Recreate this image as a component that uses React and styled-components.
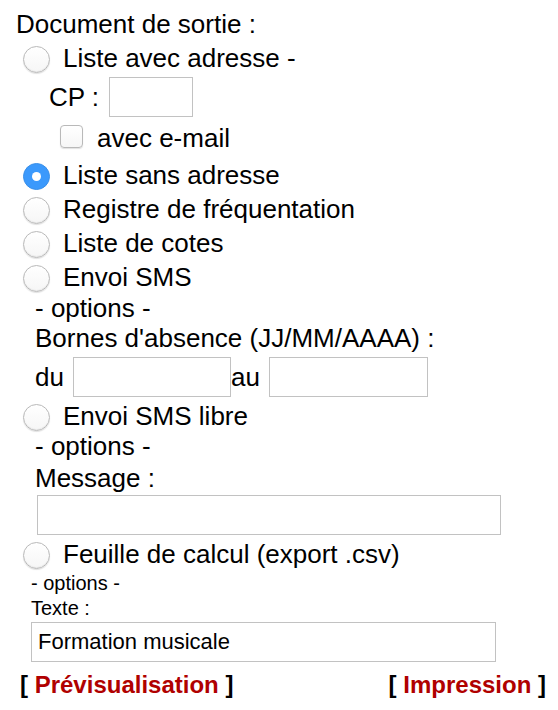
import React, { useState } from 'react'
import styled, { createGlobalStyle } from 'styled-components'

const GlobalStyle = createGlobalStyle`
  body {
    margin: 0;
    background: #fff;
    font-family: "Liberation Sans", Arial, Helvetica, sans-serif;
    color: #000;
  }
`

const Page = styled.form`
  display: flex;
  flex-direction: column;
  padding: 9px 10px 0 16px;
  font-size: 26px;
  line-height: 30px;
`

const Line = styled.div`
  display: flex;
  align-items: center;
  margin-top: ${p => p.$mt || 0}px;
  padding-left: ${p => p.$indent || 0}px;
  height: ${p => p.$h || 30}px;
  font-size: ${p => p.$size || 26}px;
  line-height: ${p => p.$h || 30}px;
  white-space: nowrap;
`

const RadioRow = styled.label`
  display: flex;
  align-items: center;
  height: 32px;
  margin-top: ${p => p.$mt || 0}px;
  padding-left: 7px;
  white-space: nowrap;
  cursor: pointer;
`

const RadioDot = styled.span`
  flex: none;
  box-sizing: border-box;
  width: 27px;
  height: 27px;
  margin: 2px 13px 0 0;
  border-radius: 50%;
  display: flex;
  align-items: center;
  justify-content: center;
  ${p => p.$checked
    ? `
    background: #3b99fc;
    border: 1px solid #3a8fe8;
  `
    : `
    background: linear-gradient(#ffffff, #f6f6f6);
    border: 1px solid #b9b9b9;
    box-shadow: inset 0 -1px 1px rgba(0, 0, 0, 0.06), 0 1px 1px rgba(0, 0, 0, 0.12);
  `}

  &::after {
    content: '';
    display: ${p => (p.$checked ? 'block' : 'none')};
    width: 9px;
    height: 9px;
    border-radius: 50%;
    background: #fff;
  }
`

const CheckRow = styled.label`
  display: flex;
  align-items: center;
  height: 30px;
  margin-top: 6px;
  padding-left: 44px;
  white-space: nowrap;
`

const CheckBox = styled.span`
  flex: none;
  box-sizing: border-box;
  width: 23px;
  height: 23px;
  margin: 0 14px 3px 0;
  border-radius: 4px;
  border: 1px solid #b9b9b9;
  background: linear-gradient(#ffffff, #f6f6f6);
  box-shadow: 0 1px 1px rgba(0, 0, 0, 0.12);
`

const Field = styled.input`
  box-sizing: border-box;
  flex: none;
  width: ${p => p.$w}px;
  height: 40px;
  margin: 0 0 0 ${p => p.$ml || 0}px;
  padding: 0 6px;
  border: 1px solid #c2c2c2;
  border-radius: 0;
  background: #fff;
  font-family: "Liberation Sans", Arial, sans-serif;
  font-size: 22px;
  color: #000;
  outline: none;
`

const FieldRow = styled.div`
  display: flex;
  align-items: center;
  height: 40px;
  margin-top: ${p => p.$mt || 0}px;
  padding-left: ${p => p.$indent || 0}px;
  white-space: nowrap;
`

const Actions = styled.div`
  display: flex;
  justify-content: space-between;
  align-items: center;
  margin-top: 9px;
  padding: 0 2px 0 4px;
  height: 28px;
  font-size: 24px;
  line-height: 28px;
  font-weight: bold;
  white-space: nowrap;
`

const ActionLink = styled.a`
  color: #b00000;
  text-decoration: none;
  cursor: pointer;
`

function Radio ({ label, checked, mt, onPick }) {
  return (
    <RadioRow $mt={mt} onClick={onPick}>
      <RadioDot $checked={checked} />
      {label}
    </RadioRow>
  )
}

export default function App () {
  const [doc, setDoc] = useState('sans')
  const [email, setEmail] = useState(false)

  return (
    <>
      <GlobalStyle />
      <Page onSubmit={e => e.preventDefault()}>
        <Line>Document de sortie :</Line>

        <Radio label="Liste avec adresse -" mt={3}
          checked={doc === 'avec'} onPick={() => setDoc('avec')} />
        <FieldRow $mt={3} $indent={33}>
          CP :
          <Field $w={84} $ml={10} />
        </FieldRow>
        <CheckRow onClick={() => setEmail(!email)}>
          <CheckBox />
          avec e-mail
        </CheckRow>

        <Radio label="Liste sans adresse" mt={6}
          checked={doc === 'sans'} onPick={() => setDoc('sans')} />
        <Radio label="Registre de fréquentation" mt={2}
          checked={doc === 'registre'} onPick={() => setDoc('registre')} />
        <Radio label="Liste de cotes" mt={2}
          checked={doc === 'cotes'} onPick={() => setDoc('cotes')} />
        <Radio label="Envoi SMS" mt={2}
          checked={doc === 'sms'} onPick={() => setDoc('sms')} />
        <Line $indent={19}>- options -</Line>
        <Line $indent={19}>Bornes d'absence (JJ/MM/AAAA) :</Line>
        <FieldRow $mt={4} $indent={19}>
          du
          <Field $w={158} $ml={9} />
          au
          <Field $w={159} $ml={9} />
        </FieldRow>

        <Radio label="Envoi SMS libre" mt={3}
          checked={doc === 'smslibre'} onPick={() => setDoc('smslibre')} />
        <Line $mt={-1} $indent={19}>- options -</Line>
        <Line $mt={2} $indent={19}>Message :</Line>
        <FieldRow $mt={2} $indent={21}>
          <Field $w={464} />
        </FieldRow>

        <Radio label="Feuille de calcul (export .csv)" mt={3}
          checked={doc === 'csv'} onPick={() => setDoc('csv')} />
        <Line $mt={1} $indent={15} $size={20} $h={24}>- options -</Line>
        <Line $mt={1} $indent={15} $size={20} $h={24}>Texte :</Line>
        <FieldRow $mt={2} $indent={15}>
          <Field $w={465} defaultValue="Formation musicale" />
        </FieldRow>

        <Actions>
          <span>[ <ActionLink>Prévisualisation</ActionLink> ]</span>
          <span>[ <ActionLink>Impression</ActionLink> ]</span>
        </Actions>
      </Page>
    </>
  )
}
